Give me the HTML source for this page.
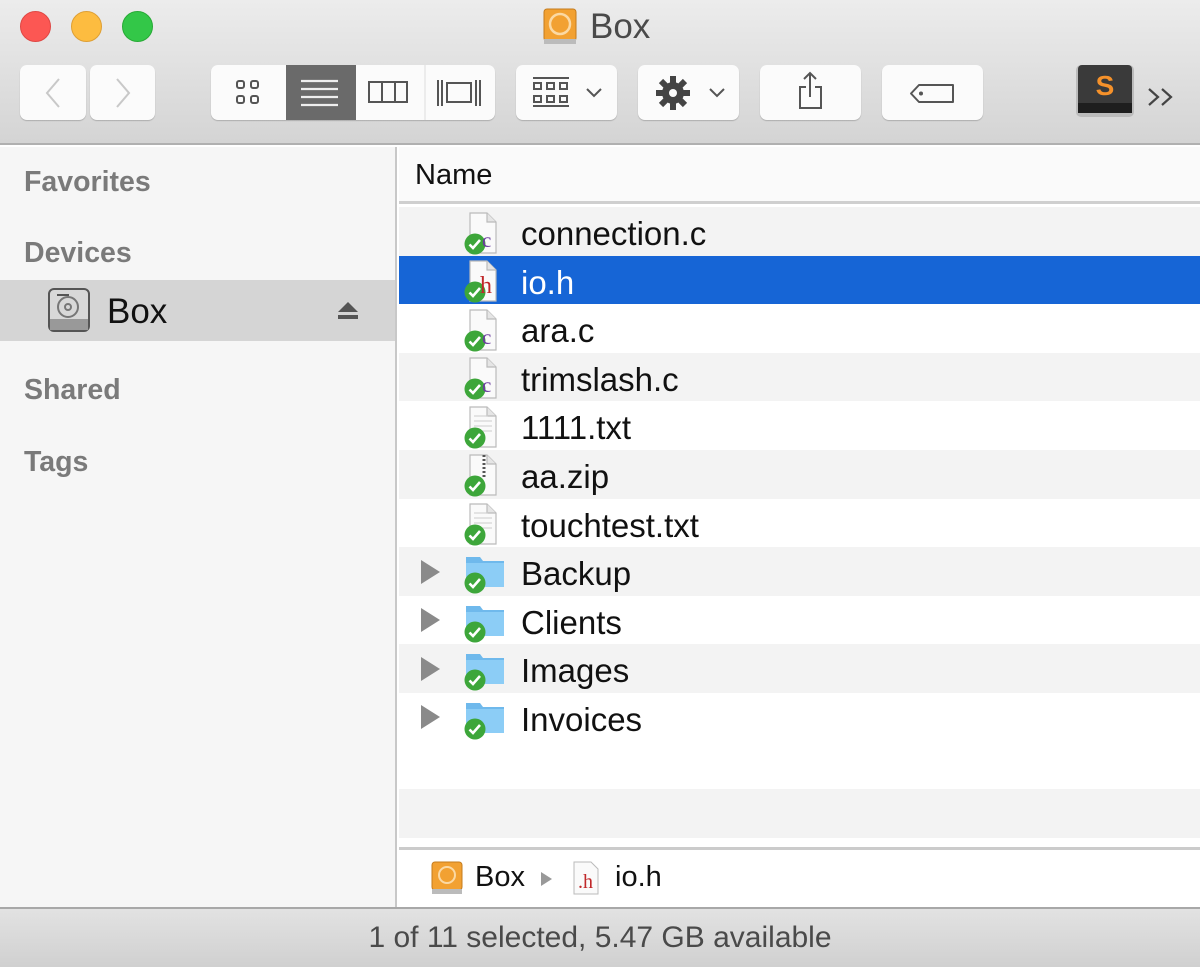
<!DOCTYPE html>
<html><head><meta charset="utf-8"><style>
*{margin:0;padding:0;box-sizing:border-box}
body{width:1200px;height:967px;overflow:hidden;font-family:"Liberation Sans",sans-serif;background:#fff;position:relative}
.top{position:absolute;left:0;top:0;width:1200px;height:145px;background:linear-gradient(#ececec,#d4d4d4);border-bottom:2px solid #b0b0b0}
.light{position:absolute;top:11px;width:31px;height:31px;border-radius:50%}
.title{position:absolute;left:590px;top:7px;font-size:35px;color:#4a4a4a}
.btn{position:absolute;top:65px;height:55px;background:#fbfbfb;border-radius:7px;box-shadow:0 1px 1px rgba(0,0,0,.2)}
.side{position:absolute;left:0;top:147px;width:397px;height:760px;background:#f6f6f6;border-right:2px solid #c8c8c8}
.sh{position:absolute;left:24px;font-size:28.5px;font-weight:bold;color:#7a7a7a}
.hdr{position:absolute;left:399px;top:147px;width:801px;height:57px;background:#fafafa;border-bottom:3px solid #cfcfcf}
.row{position:absolute;left:399px;width:801px;height:48.6px;font-size:33px;color:#111}
.row span{position:absolute;left:122px;top:8px}
.path{position:absolute;left:399px;top:847px;width:801px;height:60px;background:#fff;border-top:3px solid #cbcbcb}
.status{position:absolute;left:0;top:907px;width:1200px;height:60px;background:linear-gradient(#e2e2e2,#d0d0d0);border-top:2px solid #a8a8a8;text-align:center;font-size:30px;color:#4a4a4a;line-height:58px}
</style></head><body>
<svg width="0" height="0" style="position:absolute">
<defs>
<symbol id="file" viewBox="0 0 40 44"><path d="M8 2h17l9 9v31H8z" fill="#fafafa" stroke="#bbb" stroke-width="1.2"/><path d="M25 2v9h9" fill="#e5e5e5" stroke="#bbb" stroke-width="1.2"/></symbol>
<symbol id="chk" viewBox="0 0 22 22"><circle cx="11" cy="11" r="10.5" fill="#3da63a"/><path d="M5.5 11.5l3.5 3.5 7-8" fill="none" stroke="#fff" stroke-width="2.6"/></symbol>
<symbol id="fold" viewBox="0 0 44 40"><path d="M3 6h14l3 4h21v26H3z" fill="#6fb9ec"/><path d="M3 12h38v24H3z" fill="#8ccdf6"/></symbol>
</defs></svg>

<div class="top">
  <div class="light" style="left:20px;background:#fc5753;border:1px solid #df4744"></div>
  <div class="light" style="left:71px;background:#fdbc40;border:1px solid #de9f34"></div>
  <div class="light" style="left:122px;background:#33c748;border:1px solid #27aa35"></div>
  <svg style="position:absolute;left:541px;top:7px" width="38" height="38" viewBox="0 0 38 38"><rect x="3" y="2" width="32" height="32" rx="3" fill="#f2a132" stroke="#c47c1e"/><rect x="3" y="32" width="32" height="5" fill="#bbb"/><circle cx="19" cy="17" r="10" fill="none" stroke="#fbd9a4" stroke-width="2.5"/></svg>
  <div class="title">Box</div>

  <div class="btn" style="left:20px;width:66px"><svg width="66" height="55"><path d="M39 14L27 28l12 14" fill="none" stroke="#c8c8c8" stroke-width="2"/></svg></div>
  <div class="btn" style="left:90px;width:65px"><svg width="65" height="55"><path d="M27 14l12 14-12 14" fill="none" stroke="#c8c8c8" stroke-width="2"/></svg></div>

  <div class="btn" style="left:211px;width:284px;overflow:hidden">
    <svg width="284" height="55">
      <g fill="none" stroke="#555" stroke-width="2"><rect x="26" y="16" width="7" height="7" rx="2"/><rect x="40" y="16" width="7" height="7" rx="2"/><rect x="26" y="31" width="7" height="7" rx="2"/><rect x="40" y="31" width="7" height="7" rx="2"/></g>
      <rect x="75" y="0" width="70" height="55" fill="#6a6a6a"/>
      <g stroke="#eee" stroke-width="2.2"><path d="M90 16h37M90 24h37M90 32h37M90 40h37"/></g>
      <g fill="none" stroke="#555" stroke-width="2"><rect x="158" y="17" width="38" height="20"/><path d="M171 17v20M184 17v20"/>
      <path d="M227 15v26M231 15v26M265 15v26M269 15v26"/><rect x="236" y="18" width="24" height="19"/></g>
      <path d="M214 0v55" stroke="#ddd"/>
    </svg>
  </div>
  <div class="btn" style="left:516px;width:101px"><svg width="101" height="55"><g stroke="#555" stroke-width="2" fill="none"><path d="M17 13h36M17 41h36"/><rect x="18" y="18" width="7" height="6"/><rect x="31" y="18" width="7" height="6"/><rect x="44" y="18" width="7" height="6"/><rect x="18" y="31" width="7" height="6"/><rect x="31" y="31" width="7" height="6"/><rect x="44" y="31" width="7" height="6"/><path d="M71 24l7 7 7-7"/></g></svg></div>
  <div class="btn" style="left:638px;width:101px"><svg width="101" height="55"><g transform="translate(35 28)"><circle r="11" fill="#444"/><g stroke="#444" stroke-width="6"><path d="M0-17V17M-17 0H17M-12-12L12 12M-12 12L12-12"/></g><circle r="4" fill="#fbfbfb"/></g><path d="M72 24l7 7 7-7" fill="none" stroke="#555" stroke-width="2"/></svg></div>
  <div class="btn" style="left:760px;width:101px"><svg width="101" height="55"><g fill="none" stroke="#555" stroke-width="2"><path d="M46 22h-6v21h21V22h-6"/><path d="M50 8v24M44 14l6-6 6 6"/></g></svg></div>
  <div class="btn" style="left:882px;width:101px"><svg width="101" height="55"><path d="M37 20h34v17H37l-8-8.5z" fill="none" stroke="#555" stroke-width="2" stroke-linejoin="round"/><circle cx="39" cy="28.5" r="2" fill="#555"/></svg></div>
  <svg style="position:absolute;left:1074px;top:63px" width="62" height="56"><rect x="2" y="2" width="58" height="52" rx="5" fill="#bbb"/><rect x="4" y="2" width="54" height="46" rx="4" fill="#3a3a3a"/><rect x="4" y="40" width="54" height="10" fill="#1e1e1e"/><text x="31" y="32" text-anchor="middle" font-family="Liberation Sans" font-weight="bold" font-size="28" fill="#f5912a">S</text></svg>
  <svg style="position:absolute;left:1146px;top:85px" width="32" height="24"><path d="M3 4l9 8-9 8M16 4l9 8-9 8" fill="none" stroke="#444" stroke-width="2.2"/></svg>
</div>

<div class="side">
  <div class="sh" style="top:19px">Favorites</div>
  <div class="sh" style="top:90px">Devices</div>
  <div style="position:absolute;left:0;top:133px;width:395px;height:61px;background:#d5d5d5"></div>
  <svg style="position:absolute;left:47px;top:140px" width="44" height="46" viewBox="0 0 44 46"><rect x="2" y="2" width="40" height="42" rx="5" fill="#d8d8d8" stroke="#555" stroke-width="2"/><rect x="3" y="32" width="38" height="11" fill="#999"/><circle cx="21" cy="20" r="10" fill="none" stroke="#777" stroke-width="2"/><circle cx="21" cy="20" r="3" fill="none" stroke="#777" stroke-width="2"/><path d="M10 8h12" stroke="#555" stroke-width="2"/></svg>
  <div style="position:absolute;left:107px;top:145px;font-size:35px;color:#111">Box</div>
  <svg style="position:absolute;left:336px;top:153px" width="24" height="22"><path d="M12 2l10 10H2z" fill="#555"/><rect x="2" y="15" width="20" height="4" fill="#555"/></svg>
  <div class="sh" style="top:227px">Shared</div>
  <div class="sh" style="top:299px">Tags</div>
</div>

<div class="hdr"><div style="position:absolute;left:16px;top:12px;font-size:29px;color:#111">Name</div></div>
<div style="position:absolute;left:399px;top:204px;width:801px;height:3px;background:#fff"></div>

<div class="row" style="top:207px;background:#f3f3f3"><span>connection.c</span></div>
<div class="row" style="top:255.6px;background:#1665d6;color:#fff"><span>io.h</span></div>
<div class="row" style="top:304.2px;background:#fff"><span>ara.c</span></div>
<div class="row" style="top:352.8px;background:#f3f3f3"><span>trimslash.c</span></div>
<div class="row" style="top:401.4px;background:#fff"><span>1111.txt</span></div>
<div class="row" style="top:450px;background:#f3f3f3"><span>aa.zip</span></div>
<div class="row" style="top:498.6px;background:#fff"><span>touchtest.txt</span></div>
<div class="row" style="top:547.2px;background:#f3f3f3"><span>Backup</span></div>
<div class="row" style="top:595.8px;background:#fff"><span>Clients</span></div>
<div class="row" style="top:644.4px;background:#f3f3f3"><span>Images</span></div>
<div class="row" style="top:693px;background:#fff"><span>Invoices</span></div>
<div class="row" style="top:741.6px;background:#fff"></div>
<div class="row" style="top:789px;background:#f3f3f3"></div>

<svg style="position:absolute;left:0;top:0" width="1200" height="967">
  <g>
    <use href="#file" x="462" y="211" width="40" height="44"/>
    <use href="#file" x="462" y="259" width="40" height="44"/>
    <use href="#file" x="462" y="308" width="40" height="44"/>
    <use href="#file" x="462" y="356" width="40" height="44"/>
    <use href="#file" x="462" y="405" width="40" height="44"/><g stroke="#ccc"><path d="M474 416h14M474 421h18M474 426h18M474 431h18"/></g>
    <use href="#file" x="462" y="453" width="40" height="44"/><path d="M484 455v22" stroke="#555" stroke-width="3" stroke-dasharray="2 2"/>
    <use href="#file" x="462" y="502" width="40" height="44"/><g stroke="#ccc"><path d="M474 513h14M474 518h18M474 523h18M474 528h18"/></g>
    <use href="#fold" x="463" y="551" width="44" height="40"/>
    <use href="#fold" x="463" y="600" width="44" height="40"/>
    <use href="#fold" x="463" y="648" width="44" height="40"/>
    <use href="#fold" x="463" y="697" width="44" height="40"/>
    <use href="#chk" x="464" y="233" width="22" height="22"/>
    <use href="#chk" x="464" y="281" width="22" height="22"/>
    <use href="#chk" x="464" y="330" width="22" height="22"/>
    <use href="#chk" x="464" y="378" width="22" height="22"/>
    <use href="#chk" x="464" y="427" width="22" height="22"/>
    <use href="#chk" x="464" y="475" width="22" height="22"/>
    <use href="#chk" x="464" y="524" width="22" height="22"/>
    <use href="#chk" x="464" y="572" width="22" height="22"/>
    <use href="#chk" x="464" y="621" width="22" height="22"/>
    <use href="#chk" x="464" y="669" width="22" height="22"/>
    <use href="#chk" x="464" y="718" width="22" height="22"/>
    <text x="482" y="247" font-family="Liberation Serif" font-size="21" fill="#6a3aa0">c</text>
    <text x="480" y="293" font-family="Liberation Serif" font-size="24" fill="#c0282a">h</text>
    <text x="482" y="344" font-family="Liberation Serif" font-size="21" fill="#6a3aa0">c</text>
    <text x="482" y="392" font-family="Liberation Serif" font-size="21" fill="#6a3aa0">c</text>
    <g fill="#8a8a8a"><path d="M421 560l19 12-19 12z"/><path d="M421 608l19 12-19 12z"/><path d="M421 657l19 12-19 12z"/><path d="M421 705l19 12-19 12z"/></g>
  </g>
</svg>

<div class="path">
  <svg style="position:absolute;left:31px;top:10px" width="34" height="36"><rect x="2" y="2" width="30" height="28" rx="3" fill="#f2a132" stroke="#c47c1e"/><rect x="2" y="29" width="30" height="5" fill="#bbb"/><circle cx="17" cy="15" r="8" fill="none" stroke="#fbd9a4" stroke-width="2"/></svg>
  <div style="position:absolute;left:76px;top:11px;font-size:29px;color:#111">Box</div>
  <svg style="position:absolute;left:140px;top:20px" width="14" height="18"><path d="M2 2l11 7-11 7z" fill="#999"/></svg>
  <svg style="position:absolute;left:172px;top:10px" width="30" height="36"><path d="M3 2h17l7 7v25H3z" fill="#fafafa" stroke="#bbb"/><text x="7" y="28" font-family="Liberation Serif" font-size="20" fill="#c0282a">.h</text></svg>
  <div style="position:absolute;left:216px;top:11px;font-size:29px;color:#111">io.h</div>
</div>

<div class="status">1 of 11 selected, 5.47 GB available</div>
</body></html>
